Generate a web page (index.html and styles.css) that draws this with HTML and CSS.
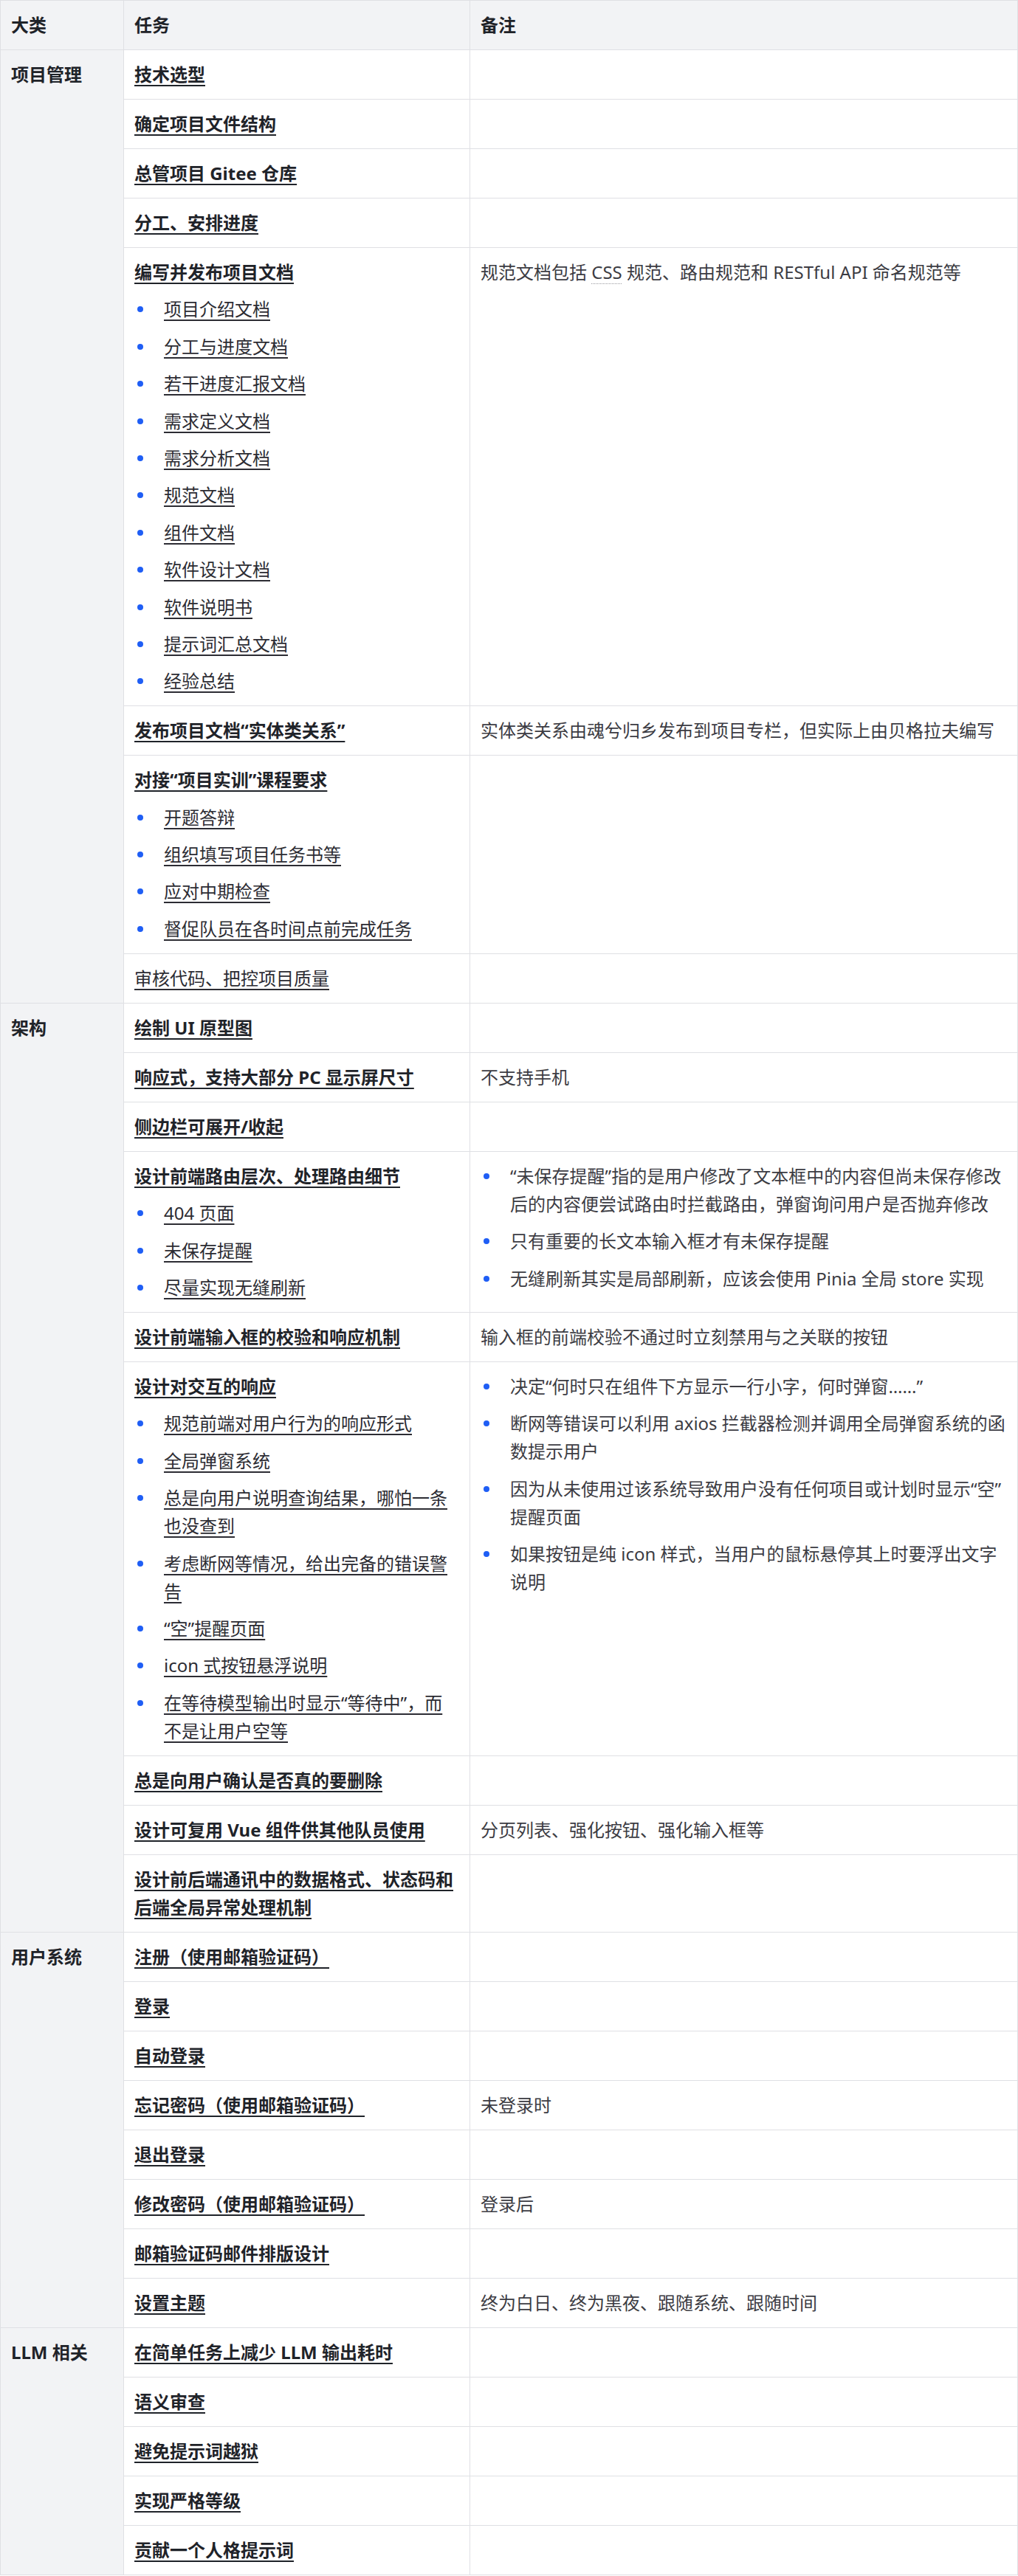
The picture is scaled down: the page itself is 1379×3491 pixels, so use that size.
FILE: index.html
```html
<!DOCTYPE html>
<html lang="zh-CN">
<head>
<meta charset="utf-8">
<title>项目分工</title>
<link rel="stylesheet" href="styles.css">
</head>
<body>
<table class="plan">
  <colgroup>
    <col class="col-cat">
    <col class="col-task">
    <col class="col-note">
  </colgroup>
  <thead>
    <tr><th>大类</th><th>任务</th><th>备注</th></tr>
  </thead>
  <tbody>
    <tr>
      <td class="cat" rowspan="8">项目管理</td>
      <td><a class="task" href="#">技术选型</a></td>
      <td class="note"></td>
    </tr>
    <tr><td><a class="task" href="#">确定项目文件结构</a></td><td class="note"></td></tr>
    <tr><td><a class="task" href="#">总管项目 Gitee 仓库</a></td><td class="note"></td></tr>
    <tr><td><a class="task" href="#">分工、安排进度</a></td><td class="note"></td></tr>
    <tr>
      <td>
        <a class="task" href="#">编写并发布项目文档</a>
        <ul class="sub">
          <li><a class="item" href="#">项目介绍文档</a></li>
          <li><a class="item" href="#">分工与进度文档</a></li>
          <li><a class="item" href="#">若干进度汇报文档</a></li>
          <li><a class="item" href="#">需求定义文档</a></li>
          <li><a class="item" href="#">需求分析文档</a></li>
          <li><a class="item" href="#">规范文档</a></li>
          <li><a class="item" href="#">组件文档</a></li>
          <li><a class="item" href="#">软件设计文档</a></li>
          <li><a class="item" href="#">软件说明书</a></li>
          <li><a class="item" href="#">提示词汇总文档</a></li>
          <li><a class="item" href="#">经验总结</a></li>
        </ul>
      </td>
      <td class="note">规范文档包括 <abbr class="abbr" title="Cascading Style Sheets">CSS</abbr> 规范、路由规范和 RESTful API 命名规范等</td>
    </tr>
    <tr>
      <td><a class="task" href="#">发布项目文档“实体类关系”</a></td>
      <td class="note">实体类关系由魂兮归乡发布到项目专栏，但实际上由贝格拉夫编写</td>
    </tr>
    <tr>
      <td>
        <a class="task" href="#">对接“项目实训”课程要求</a>
        <ul class="sub">
          <li><a class="item" href="#">开题答辩</a></li>
          <li><a class="item" href="#">组织填写项目任务书等</a></li>
          <li><a class="item" href="#">应对中期检查</a></li>
          <li><a class="item" href="#">督促队员在各时间点前完成任务</a></li>
        </ul>
      </td>
      <td class="note"></td>
    </tr>
    <tr><td><a class="item" href="#">审核代码、把控项目质量</a></td><td class="note"></td></tr>

    <tr>
      <td class="cat" rowspan="9">架构</td>
      <td><a class="task" href="#">绘制 UI 原型图</a></td>
      <td class="note"></td>
    </tr>
    <tr><td><a class="task" href="#">响应式，支持大部分 PC 显示屏尺寸</a></td><td class="note">不支持手机</td></tr>
    <tr><td><a class="task" href="#">侧边栏可展开/收起</a></td><td class="note"></td></tr>
    <tr>
      <td>
        <a class="task" href="#">设计前端路由层次、处理路由细节</a>
        <ul class="sub">
          <li><a class="item" href="#">404 页面</a></li>
          <li><a class="item" href="#">未保存提醒</a></li>
          <li><a class="item" href="#">尽量实现无缝刷新</a></li>
        </ul>
      </td>
      <td class="note">
        <ul class="sub sub-note">
          <li><span>“未保存提醒”指的是用户修改了文本框中的内容但尚未保存修改后的内容便尝试路由时拦截路由，弹窗询问用户是否抛弃修改</span></li>
          <li><span>只有重要的长文本输入框才有未保存提醒</span></li>
          <li><span>无缝刷新其实是局部刷新，应该会使用 Pinia 全局 store 实现</span></li>
        </ul>
      </td>
    </tr>
    <tr><td><a class="task" href="#">设计前端输入框的校验和响应机制</a></td><td class="note">输入框的前端校验不通过时立刻禁用与之关联的按钮</td></tr>
    <tr>
      <td>
        <a class="task" href="#">设计对交互的响应</a>
        <ul class="sub">
          <li><a class="item" href="#">规范前端对用户行为的响应形式</a></li>
          <li><a class="item" href="#">全局弹窗系统</a></li>
          <li><a class="item" href="#">总是向用户说明查询结果，哪怕一条也没查到</a></li>
          <li><a class="item" href="#">考虑断网等情况，给出完备的错误警告</a></li>
          <li><a class="item" href="#">“空”提醒页面</a></li>
          <li><a class="item" href="#">icon 式按钮悬浮说明</a></li>
          <li><a class="item" href="#">在等待模型输出时显示“等待中”，而不是让用户空等</a></li>
        </ul>
      </td>
      <td class="note">
        <ul class="sub sub-note">
          <li><span>决定“何时只在组件下方显示一行小字，何时弹窗……”</span></li>
          <li><span>断网等错误可以利用 axios 拦截器检测并调用全局弹窗系统的函数提示用户</span></li>
          <li><span>因为从未使用过该系统导致用户没有任何项目或计划时显示“空”提醒页面</span></li>
          <li><span>如果按钮是纯 icon 样式，当用户的鼠标悬停其上时要浮出文字说明</span></li>
        </ul>
      </td>
    </tr>
    <tr><td><a class="task" href="#">总是向用户确认是否真的要删除</a></td><td class="note"></td></tr>
    <tr><td><a class="task" href="#">设计可复用 Vue 组件供其他队员使用</a></td><td class="note">分页列表、强化按钮、强化输入框等</td></tr>
    <tr><td><a class="task" href="#">设计前后端通讯中的数据格式、状态码和后端全局异常处理机制</a></td><td class="note"></td></tr>

    <tr>
      <td class="cat" rowspan="8">用户系统</td>
      <td><a class="task" href="#">注册（使用邮箱验证码）</a></td>
      <td class="note"></td>
    </tr>
    <tr><td><a class="task" href="#">登录</a></td><td class="note"></td></tr>
    <tr><td><a class="task" href="#">自动登录</a></td><td class="note"></td></tr>
    <tr><td><a class="task" href="#">忘记密码（使用邮箱验证码）</a></td><td class="note">未登录时</td></tr>
    <tr><td><a class="task" href="#">退出登录</a></td><td class="note"></td></tr>
    <tr><td><a class="task" href="#">修改密码（使用邮箱验证码）</a></td><td class="note">登录后</td></tr>
    <tr><td><a class="task" href="#">邮箱验证码邮件排版设计</a></td><td class="note"></td></tr>
    <tr><td><a class="task" href="#">设置主题</a></td><td class="note">终为白日、终为黑夜、跟随系统、跟随时间</td></tr>

    <tr>
      <td class="cat" rowspan="5">LLM 相关</td>
      <td><a class="task" href="#">在简单任务上减少 LLM 输出耗时</a></td>
      <td class="note"></td>
    </tr>
    <tr><td><a class="task" href="#">语义审查</a></td><td class="note"></td></tr>
    <tr><td><a class="task" href="#">避免提示词越狱</a></td><td class="note"></td></tr>
    <tr><td><a class="task" href="#">实现严格等级</a></td><td class="note"></td></tr>
    <tr><td><a class="task" href="#">贡献一个人格提示词</a></td><td class="note"></td></tr>
  </tbody>
</table>
</body>
</html>
```

FILE: styles.css
```css
html, body {
  margin: 0;
  padding: 0;
  background: #ffffff;
}

body {
  font-family: "Noto Sans", "Noto Sans CJK SC", sans-serif;
  font-size: 24px;
  line-height: 38px;
  color: #1f2329;
}

.plan {
  width: 1379px;
  border-collapse: collapse;
  table-layout: fixed;
}

.col-cat {
  width: 167px;
}

.col-task {
  width: 469px;
}

.plan th,
.plan td {
  border: 1px solid #dfe0e4;
  padding: 14px 14px;
  text-align: left;
  vertical-align: top;
}

.plan thead th {
  background: #f2f3f5;
  font-weight: 700;
  color: #1f2329;
}

.cat {
  background: #f2f3f5;
  font-weight: 700;
  color: #1f2329;
}

.note {
  color: #3c3c43;
}

.task,
.item {
  color: #1f2329;
  text-decoration: underline;
  text-decoration-thickness: 2px;
  text-underline-offset: 5px;
}

.task {
  font-weight: 700;
}

.item {
  font-weight: 400;
  color: #2c2c33;
}

.abbr {
  text-decoration: underline dotted #9a9aa0;
  text-decoration-thickness: 1px;
  text-underline-offset: 6px;
}

.sub {
  list-style: none;
  margin: 12.4px 0 0;
  padding: 0 0 0 4px;
  display: flex;
  flex-direction: column;
  gap: 12.4px;
}

.sub-note {
  margin-top: 0;
}

.sub li {
  display: flex;
  gap: 28px;
}

.sub li::before {
  content: "";
  flex: none;
  width: 8px;
  height: 8px;
  margin-top: 15px;
  border-radius: 50%;
  background: #1f5ef5;
}
```
